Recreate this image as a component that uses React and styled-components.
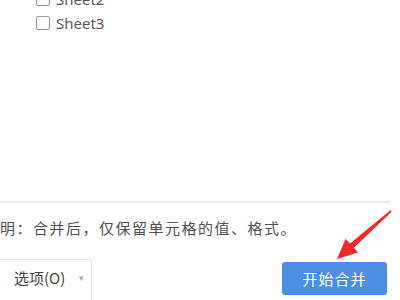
import React from "react";
import styled, { createGlobalStyle } from "styled-components";

const GlobalStyle = createGlobalStyle`
  html, body {
    margin: 0;
    padding: 0;
    background: #ffffff;
  }
  body {
    font-family: "Noto Sans", "Noto Sans CJK SC", sans-serif;
  }
`;

const sheets = ["Sheet2", "Sheet3"];

function App() {
  return (
    <>
      <GlobalStyle />
      <Page>
        <Panel>
          <SheetList>
            {sheets.map((name) => (
              <SheetRow key={name}>
                <Box />
                <span>{name}</span>
              </SheetRow>
            ))}
          </SheetList>
          <Divider />
          <Note>说明：合并后，仅保留单元格的值、格式。</Note>
          <Footer>
            <Select>
              <span>选项(O)</span>
              <Caret>▾</Caret>
            </Select>
            <StartButton>开始合并</StartButton>
          </Footer>
        </Panel>
        <Arrow width="400" height="300" viewBox="0 0 400 300">
          <polygon
            points="337,259 358,252.4 353.9,247.8 391.6,211.8 390.4,210.2 350.1,243.6 345.5,239"
            fill="#f22828"
          />
        </Arrow>
      </Page>
    </>
  );
}

export default App;

const Page = styled.div`
  position: relative;
  width: 400px;
  height: 300px;
  overflow: hidden;
  background: #fff;
`;

const Panel = styled.div`
  display: flex;
  flex-direction: column;
  width: 404px;
  height: 320px;
  margin-left: -14px;
  margin-top: -13px;
`;

const SheetList = styled.div`
  display: flex;
  flex-direction: column;
  padding-left: 50px;
  height: 216px;
`;

const SheetRow = styled.label`
  display: flex;
  align-items: center;
  gap: 6px;
  height: 24px;
  font-size: 15px;
  color: #5a5a5a;
`;

const Box = styled.span`
  width: 12px;
  height: 12px;
  border: 1px solid #9a9a9a;
  border-radius: 2px;
  background: #fff;
`;

const Divider = styled.div`
  height: 2px;
  background: #ececec;
`;

const Note = styled.div`
  margin-top: 16px;
  margin-left: -2.5px;
  height: 17px;
  line-height: 17px;
  font-family: "Noto Sans CJK SC", sans-serif;
  font-size: 15px;
  letter-spacing: 1.5px;
  color: #505050;
  white-space: nowrap;
`;

const Footer = styled.div`
  display: flex;
  align-items: flex-start;
  justify-content: space-between;
  margin-top: 23px;
  padding-right: 3px;
`;

const Select = styled.div`
  display: flex;
  align-items: center;
  box-sizing: border-box;
  width: 106px;
  height: 48px;
  padding: 0 0 12px 27px;
  border: 1px solid #e6e6e6;
  border-radius: 2px;
  font-family: "Noto Sans CJK SC", sans-serif;
  font-size: 15px;
  color: #444;
`;

const Caret = styled.span`
  margin-left: 14px;
  font-size: 9px;
  color: #aaa;
`;

const StartButton = styled.button`
  margin-top: 3px;
  width: 105px;
  height: 33px;
  border: none;
  border-radius: 3px;
  background: #4a8fe3;
  color: #fff;
  font-family: "Noto Sans CJK SC", sans-serif;
  font-size: 15px;
  letter-spacing: 1px;
`;

const Arrow = styled.svg`
  position: absolute;
  left: 0;
  top: 0;
  pointer-events: none;
`;
